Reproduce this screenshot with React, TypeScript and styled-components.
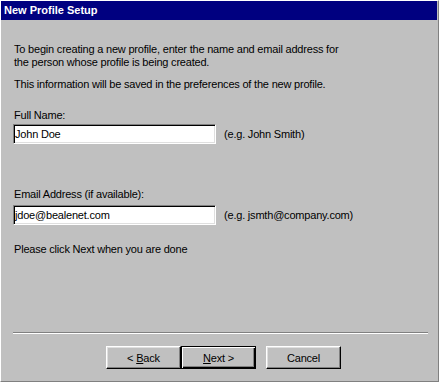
import styled, { createGlobalStyle } from "styled-components";

const GlobalStyle = createGlobalStyle`
  html, body {
    margin: 0;
    padding: 0;
    background: #c0c0c0;
  }
  body {
    font-family: "Liberation Sans", Arial, sans-serif;
    font-size: 11px;
    color: #000;
  }
`;

const Window = styled.div`
  width: 439px;
  height: 382px;
  box-sizing: border-box;
  background: #c0c0c0;
  border-top: 1px solid #fff;
  border-left: 1px solid #fff;
  border-right: 1px solid #808080;
  border-bottom: 1px solid #808080;
  padding: 0 1px 1px 0;
  display: flex;
  flex-direction: column;
`;

const TitleBar = styled.div`
  height: 19px;
  background: #000080;
  color: #fff;
  font-weight: bold;
  font-size: 11px;
  line-height: 19px;
  padding-left: 3px;
`;

const Body = styled.div`
  flex: 1;
  display: flex;
  flex-direction: column;
  padding: 0 0 0 12px;
  letter-spacing: -0.2px;
`;

const Text = styled.p<{ $top: number }>`
  margin: ${(p) => p.$top}px 0 0 1px;
  line-height: 13px;
  font-size: 11px;
`;

const FieldRow = styled.div<{ $top: number }>`
  display: flex;
  align-items: center;
  gap: 8px;
  margin-top: ${(p) => p.$top}px;
`;

const Field = styled.input`
  width: 203px;
  height: 20px;
  box-sizing: border-box;
  margin: 0;
  padding: 0 0 0 1px;
  background: #fff;
  font-family: "Liberation Sans", Arial, sans-serif;
  font-size: 11px;
  letter-spacing: -0.2px;
  color: #000;
  border: 1px solid;
  border-color: #808080 #fff #fff #808080;
  box-shadow: inset 1px 1px #000, inset -1px -1px #dfdfdf;
  outline: none;
`;

const Hint = styled.span`
  font-size: 11px;
`;

const Separator = styled.div`
  width: 415px;
  margin-top: 76px;
  border-top: 1px solid #808080;
  border-bottom: 1px solid #fff;
`;

const ButtonRow = styled.div`
  display: flex;
  margin-top: 12px;
  padding-left: 93px;
`;

const Button = styled.button<{ $default?: boolean; $gap?: number }>`
  width: 75px;
  height: 23px;
  box-sizing: border-box;
  margin: 0 0 0 ${(p) => p.$gap ?? 0}px;
  padding: 0;
  background: #c0c0c0;
  font-family: "Liberation Sans", Arial, sans-serif;
  font-size: 11px;
  letter-spacing: -0.2px;
  color: #000;
  border: 1px solid;
  border-color: ${(p) => (p.$default ? "#000" : "#fff #000 #000 #fff")};
  box-shadow: ${(p) =>
    p.$default
      ? "inset 1px 1px #fff, inset -1px -1px #000, inset -2px -2px #808080"
      : "inset -1px -1px #808080, inset 1px 1px #dfdfdf"};
  outline: none;

  u {
    text-decoration: underline;
  }
`;

export default function App() {
  return (
    <>
      <GlobalStyle />
      <Window>
        <TitleBar>New Profile Setup</TitleBar>
        <Body>
          <Text $top={23}>
            To begin creating a new profile, enter the name and email address for
            <br />
            the person whose profile is being created.
          </Text>
          <Text $top={9}>This information will be saved in the preferences of the new profile.</Text>
          <Text $top={18}>Full Name:</Text>
          <FieldRow $top={2}>
            <Field defaultValue="John Doe" readOnly />
            <Hint>(e.g. John Smith)</Hint>
          </FieldRow>
          <Text $top={44}>Email Address (if available):</Text>
          <FieldRow $top={4}>
            <Field defaultValue="jdoe@bealenet.com" readOnly />
            <Hint>(e.g. jsmth@company.com)</Hint>
          </FieldRow>
          <Text $top={18}>Please click Next when you are done</Text>
          <Separator />
          <ButtonRow>
            <Button>
              &lt; <u>B</u>ack
            </Button>
            <Button $default>
              <u>N</u>ext &gt;
            </Button>
            <Button $gap={10}>Cancel</Button>
          </ButtonRow>
        </Body>
      </Window>
    </>
  );
}
